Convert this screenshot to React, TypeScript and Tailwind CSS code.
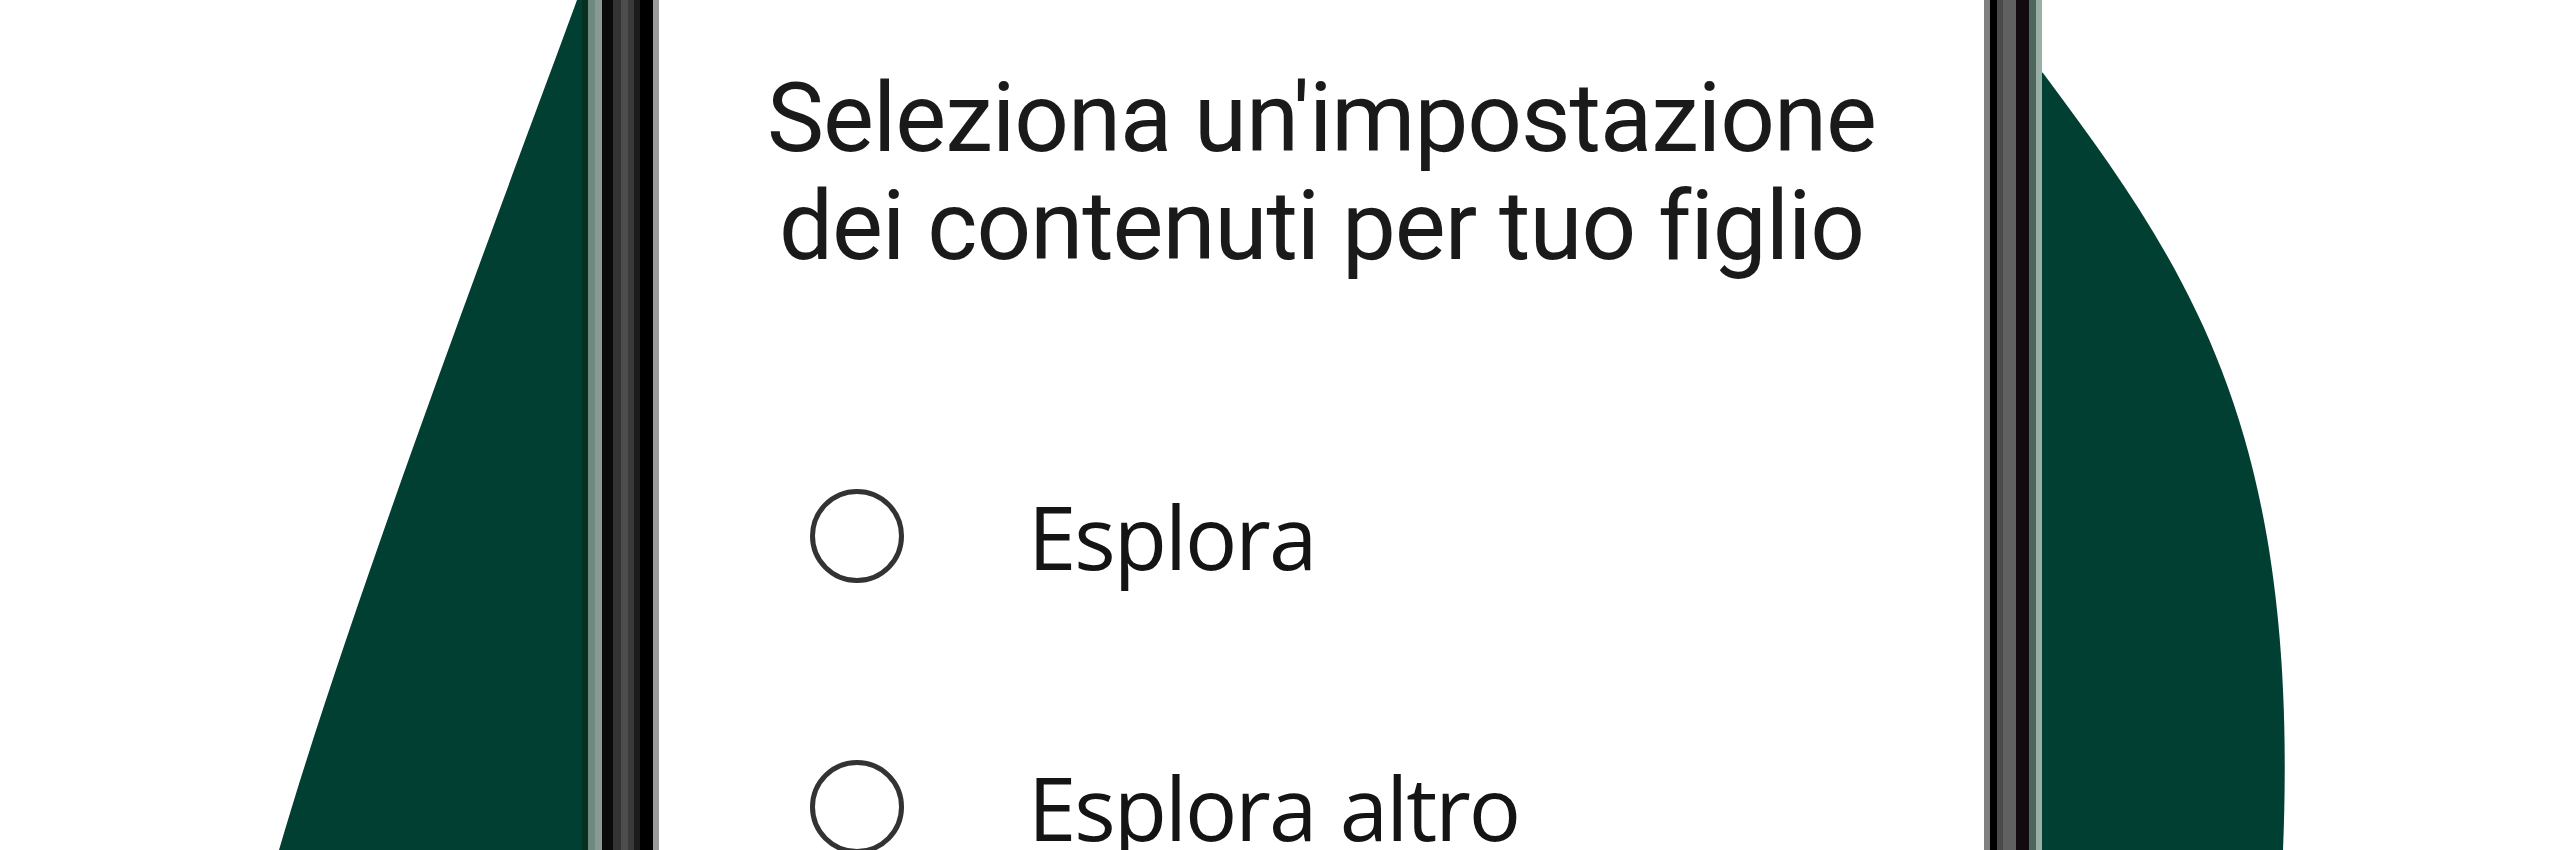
import React from "react";

const leftStripes = [
  { w: "w-[6px]", c: "bg-[#07301f]" },
  { w: "w-[7px]", c: "bg-[#6e8a80]" },
  { w: "w-[7px]", c: "bg-[#8a9a92]" },
  { w: "w-[11px]", c: "bg-[#0a0a0a]" },
  { w: "w-[8px]", c: "bg-[#333333]" },
  { w: "w-[7px]", c: "bg-[#4d4d4d]" },
  { w: "w-[6px]", c: "bg-[#3a3a3a]" },
  { w: "w-[6px]", c: "bg-[#1c1c1c]" },
  { w: "w-[13px]", c: "bg-[#000000]" },
  { w: "w-[6px]", c: "bg-[#9a9a9a]" },
];

const rightStripes = [
  { w: "w-[6px]", c: "bg-[#808080]" },
  { w: "w-[7px]", c: "bg-[#000000]" },
  { w: "w-[6px]", c: "bg-[#4a4a4a]" },
  { w: "w-[13px]", c: "bg-[#606060]" },
  { w: "w-[13px]", c: "bg-[#120a0e]" },
  { w: "w-[7px]", c: "bg-[#4f665d]" },
  { w: "w-[6px]", c: "bg-[#9ab0a6]" },
];

function Option({ label }: { label: string }) {
  return (
    <div className="flex items-center h-[96px]">
      <div className="w-[94px] h-[94px] rounded-full border-[5px] border-[#333333] shrink-0" />
      <span
        className="ml-[124px] text-[87px] leading-[96px] tracking-[-2px] [word-spacing:4px] text-[#141414]"
        style={{ fontFamily: '"Open Sans", "Noto Sans", sans-serif' }}
      >
        {label}
      </span>
    </div>
  );
}

export default function App() {
  return (
    <div className="relative w-[2560px] h-[850px] bg-white overflow-hidden">
      <svg
        className="absolute inset-0"
        width="2560"
        height="850"
        viewBox="0 0 2560 850"
      >
        <path
          d="M577,0 C515,170 355,590 279,850 L700,850 L700,0 Z"
          fill="#013f33"
        />
        <path
          d="M1990,40 L2043,73 C2190,270 2300,430 2283,850 L1990,850 Z"
          fill="#013f33"
        />
      </svg>
      <div className="relative flex h-full ml-[582px]">
        <div className="flex h-full">
          {leftStripes.map((s, i) => (
            <div key={i} className={`${s.w} ${s.c} h-full`} />
          ))}
        </div>
        <div className="w-[1325px] h-full bg-white flex flex-col">
          <h1
            className="mt-[64px] text-center text-[96px] leading-[108px] tracking-[-1px] text-[#1a1a1a] font-normal"
            style={{ fontFamily: 'Roboto, "Noto Sans", sans-serif' }}
          >
            Seleziona un'impostazione
            <br />
            dei contenuti per tuo figlio
          </h1>
          <div className="flex flex-col gap-[175px] mt-[208px] pl-[151px]">
            <Option label="Esplora" />
            <Option label="Esplora altro" />
          </div>
        </div>
        <div className="flex h-full">
          {rightStripes.map((s, i) => (
            <div key={i} className={`${s.w} ${s.c} h-full`} />
          ))}
        </div>
      </div>
    </div>
  );
}
